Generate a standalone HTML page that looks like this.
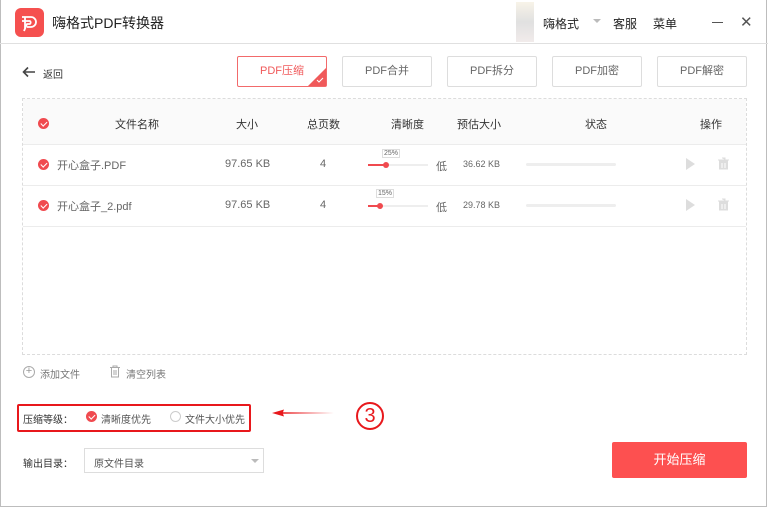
<!DOCTYPE html>
<html><head><meta charset="utf-8"><style>
*{margin:0;padding:0;box-sizing:border-box}
body{width:768px;height:509px;background:#fff;font-family:"Liberation Sans","Noto Sans CJK SC",sans-serif;position:relative;overflow:hidden;color:#333}
.a{position:absolute}
.win{left:0;top:0;width:767px;height:507px;border:1px solid #bdbdbd;border-top:none}
.tb{left:0;top:0;width:768px;height:44px;border-bottom:1px solid #e0e0e0}
.btn{height:31px;width:90px;border:1px solid #ddd;border-radius:2px;font-size:11px;color:#666;text-align:center;line-height:29px;top:56px}
.th{font-size:11px;color:#333;top:116px}
.td{font-size:11px;color:#666}
.chk{width:11px;height:11px;border-radius:50%;background:#f04a4f}
.chk:after{content:"";position:absolute;left:3.5px;top:1.5px;width:2.5px;height:5px;border:solid #fff;border-width:0 1.5px 1.5px 0;transform:rotate(45deg)}
.line{height:1px;background:#ececec;left:23px;width:723px}
</style></head><body>
<div class="a win"></div>
<div class="a tb"></div>
<div class="a" style="left:15px;top:8px;width:29px;height:29px;border-radius:6px;background:#f5504f">
<svg width="29" height="29" viewBox="0 0 29 29"><path d="M7 9h9a5 5 0 0 1 0 10h-4M10 9v12M7 13h8a2 2 0 0 1 0 3h-3l-3 7" fill="none" stroke="#fff" stroke-width="1.8" stroke-linejoin="round"/></svg></div>
<div class="a" style="left:52px;top:13px;font-size:14px;color:#222">嗨格式PDF转换器</div>
<div class="a" style="left:516px;top:2px;width:18px;height:40px;background:linear-gradient(#f3ecd9,#ccc 50%,#e8dedd);opacity:.6"></div>
<div class="a" style="left:543px;top:15px;font-size:12px;color:#222">嗨格式</div>
<div class="a" style="left:593px;top:19px;border:4px solid transparent;border-top:4px solid #bbb"></div>
<div class="a" style="left:613px;top:15px;font-size:12px;color:#222">客服</div>
<div class="a" style="left:653px;top:15px;font-size:12px;color:#222">菜单</div>
<div class="a" style="left:712px;top:22px;width:11px;height:1px;background:#555"></div>
<div class="a" style="left:740px;top:13px;font-size:15px;color:#555">✕</div>

<svg class="a" style="left:22px;top:66px" width="14" height="12"><path d="M13 6H2M6 1.5L1.5 6 6 10.5" fill="none" stroke="#444" stroke-width="1.6"/></svg>
<div class="a" style="left:43px;top:66px;font-size:10px;color:#333">返回</div>
<div class="a btn" style="left:237px;border-color:#f26a6b;color:#f0595a">PDF压缩
<div class="a" style="right:0;bottom:0;width:0;height:0;border-left:18px solid transparent;border-bottom:18px solid #f0595a"></div>
<svg class="a" style="right:2px;bottom:3px" width="8" height="6"><path d="M1 3l2 2 4-4" fill="none" stroke="#fff" stroke-width="1"/></svg></div>
<div class="a btn" style="left:342px">PDF合并</div>
<div class="a btn" style="left:447px">PDF拆分</div>
<div class="a btn" style="left:552px">PDF加密</div>
<div class="a btn" style="left:657px">PDF解密</div>

<div class="a" style="left:22px;top:98px;width:725px;height:257px;border:1px dashed #dcdcdc"></div>
<div class="a" style="left:23px;top:99px;width:723px;height:45px;background:#fafafa"></div>
<div class="a line" style="top:144px"></div>
<div class="a line" style="top:185px"></div>
<div class="a line" style="top:226px"></div>
<div class="a chk" style="left:38px;top:118px"></div>
<div class="a th" style="left:115px">文件名称</div>
<div class="a th" style="left:236px">大小</div>
<div class="a th" style="left:307px">总页数</div>
<div class="a th" style="left:391px">清晰度</div>
<div class="a th" style="left:457px">预估大小</div>
<div class="a th" style="left:585px">状态</div>
<div class="a th" style="left:700px">操作</div>

<div class="a chk" style="left:38px;top:159px"></div>
<div class="a td" style="left:57px;top:157px">开心盒子.PDF</div>
<div class="a td" style="left:225px;top:158px">97.65 KB</div>
<div class="a td" style="left:320px;top:158px">4</div>
<div class="a" style="left:382px;top:149px;font-size:7px;color:#666;border:1px solid #ddd;padding:0 1px">25%</div>
<div class="a" style="left:368px;top:164px;width:60px;height:2px;background:#eee"></div>
<div class="a" style="left:368px;top:164px;width:19px;height:2px;background:#f04a4f"></div>
<div class="a" style="left:383px;top:162px;width:6px;height:6px;border-radius:50%;background:#f04a4f"></div>
<div class="a td" style="left:436px;top:158px">低</div>
<div class="a" style="left:463px;top:159px;font-size:9px;color:#666">36.62 KB</div>
<div class="a" style="left:526px;top:163px;width:90px;height:3px;border-radius:2px;background:#eee"></div>
<div class="a" style="left:686px;top:158px;border:6px solid transparent;border-left:9px solid #ddd"></div>
<svg class="a" style="left:717px;top:157px" width="13" height="13"><path d="M1 3h11M5 1h3v2M2.5 4h8v8h-8z" fill="#ddd" stroke="#ddd"/><path d="M5 6v5M8 6v5" stroke="#fff"/></svg>

<div class="a chk" style="left:38px;top:200px"></div>
<div class="a td" style="left:57px;top:198px">开心盒子_2.pdf</div>
<div class="a td" style="left:225px;top:199px">97.65 KB</div>
<div class="a td" style="left:320px;top:199px">4</div>
<div class="a" style="left:376px;top:189px;font-size:7px;color:#666;border:1px solid #ddd;padding:0 1px">15%</div>
<div class="a" style="left:368px;top:205px;width:60px;height:2px;background:#eee"></div>
<div class="a" style="left:368px;top:205px;width:12px;height:2px;background:#f04a4f"></div>
<div class="a" style="left:377px;top:203px;width:6px;height:6px;border-radius:50%;background:#f04a4f"></div>
<div class="a td" style="left:436px;top:199px">低</div>
<div class="a" style="left:463px;top:200px;font-size:9px;color:#666">29.78 KB</div>
<div class="a" style="left:526px;top:204px;width:90px;height:3px;border-radius:2px;background:#eee"></div>
<div class="a" style="left:686px;top:199px;border:6px solid transparent;border-left:9px solid #ddd"></div>
<svg class="a" style="left:717px;top:198px" width="13" height="13"><path d="M1 3h11M5 1h3v2M2.5 4h8v8h-8z" fill="#ddd" stroke="#ddd"/><path d="M5 6v5M8 6v5" stroke="#fff"/></svg>

<div class="a" style="left:23px;top:366px;width:12px;height:12px;border:1px solid #aaa;border-radius:50%;text-align:center;line-height:9px;font-size:11px;color:#999">+</div>
<div class="a" style="left:40px;top:366px;font-size:10px;color:#777">添加文件</div>
<svg class="a" style="left:109px;top:365px" width="12" height="13"><path d="M1 2.5h10M4 2.5V1h4v1.5M2.5 2.5v9.5h7V2.5M5 5v5M7 5v5" fill="none" stroke="#aaa" stroke-width="1"/></svg>
<div class="a" style="left:126px;top:366px;font-size:10px;color:#777">清空列表</div>

<div class="a" style="left:17px;top:404px;width:234px;height:28px;border:2px solid #e8181c;border-radius:2px"></div>
<div class="a" style="left:23px;top:411px;font-size:10px;color:#333">压缩等级：</div>
<div class="a chk" style="left:86px;top:411px"></div>
<div class="a" style="left:101px;top:411px;font-size:10px;color:#555">清晰度优先</div>
<div class="a" style="left:170px;top:411px;width:11px;height:11px;border:1px solid #ccc;border-radius:50%"></div>
<div class="a" style="left:185px;top:411px;font-size:10px;color:#555">文件大小优先</div>
<svg class="a" style="left:270px;top:408px" width="66" height="10"><path d="M2 5L14 1.5 13 4.3 64 5 13 5.7 14 8.5Z" fill="#e8181c"/></svg>
<div class="a" style="left:356px;top:402px;width:28px;height:28px;border:2px solid #e8181c;border-radius:50%;color:#e8181c;font-size:20px;text-align:center;line-height:24px">3</div>

<div class="a" style="left:23px;top:455px;font-size:10px;color:#333">输出目录：</div>
<div class="a" style="left:84px;top:448px;width:180px;height:25px;border:1px solid #ddd"></div>
<div class="a" style="left:94px;top:455px;font-size:10px;color:#555">原文件目录</div>
<div class="a" style="left:251px;top:459px;border:4px solid transparent;border-top:4px solid #bbb"></div>

<div class="a" style="left:612px;top:442px;width:135px;height:36px;background:#fd5050;border-radius:2px;color:#fff;font-size:13px;text-align:center;line-height:36px">开始压缩</div>
</body></html>
